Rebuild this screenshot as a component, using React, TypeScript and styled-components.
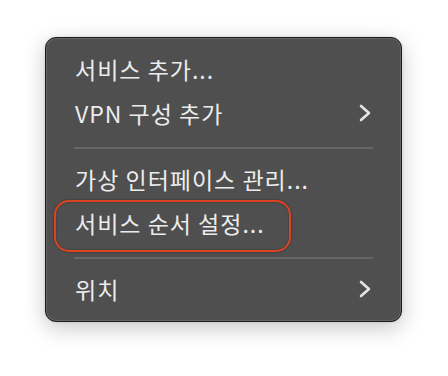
import styled, { createGlobalStyle } from 'styled-components';

const GlobalStyle = createGlobalStyle`
  html, body {
    margin: 0;
    padding: 0;
    background: #ffffff;
  }
  body {
    font-family: 'Noto Sans CJK KR', 'Noto Sans', sans-serif;
  }
`;

const Page = styled.div`
  width: 448px;
  height: 376px;
  padding: 37px 0 0 45px;
  box-sizing: border-box;
`;

const Menu = styled.div`
  position: relative;
  width: 357px;
  height: 285px;
  box-sizing: border-box;
  padding: 9px 0 0;
  background: #4f4f4f;
  border: 1px solid #1c1c1c;
  border-radius: 11px;
  box-shadow: inset 0 0 0 1px rgba(255, 255, 255, 0.13),
    0 6px 22px rgba(0, 0, 0, 0.22), 0 0 3px rgba(0, 0, 0, 0.12);
`;

const Row = styled.div`
  position: relative;
  display: flex;
  align-items: center;
  justify-content: space-between;
  height: 44px;
  padding: 0 30px 0 29px;
  color: #ececec;
  font-size: 23px;
  font-weight: 400;
  letter-spacing: 1px;
  line-height: 1;
`;

const Label = styled.span`
  white-space: nowrap;
`;

const Separator = styled.div`
  height: 2px;
  margin: 12px 28px 8px 28px;
  background: #666666;
`;

const Highlight = styled.div`
  position: absolute;
  left: 8px;
  top: -1px;
  width: 237px;
  height: 52px;
  box-sizing: border-box;
  border: 2.5px solid #dc4321;
  border-radius: 15px;
  box-shadow: 0 0 2px rgba(0, 0, 0, 0.5), inset 0 0 2px rgba(0, 0, 0, 0.4);
  pointer-events: none;
`;

const Chevron = () => (
  <svg width="12" height="18" viewBox="0 0 12 18" fill="none">
    <polyline
      points="2,2 10,9 2,16"
      stroke="#e4e4e4"
      strokeWidth="2.6"
      strokeLinecap="round"
      strokeLinejoin="round"
    />
  </svg>
);

interface Item {
  label: string;
  submenu?: boolean;
  marked?: boolean;
}

const groups: Item[][] = [
  [{ label: '서비스 추가...' }, { label: 'VPN 구성 추가', submenu: true }],
  [{ label: '가상 인터페이스 관리...' }, { label: '서비스 순서 설정...', marked: true }],
  [{ label: '위치', submenu: true }],
];

const App = () => (
  <>
    <GlobalStyle />
    <Page>
      <Menu>
        {groups.map((group, i) => (
          <div key={i}>
            {i > 0 && <Separator />}
            {group.map((item) => (
              <Row key={item.label}>
                <Label>{item.label}</Label>
                {item.submenu && <Chevron />}
                {item.marked && <Highlight />}
              </Row>
            ))}
          </div>
        ))}
      </Menu>
    </Page>
  </>
);

export default App;
